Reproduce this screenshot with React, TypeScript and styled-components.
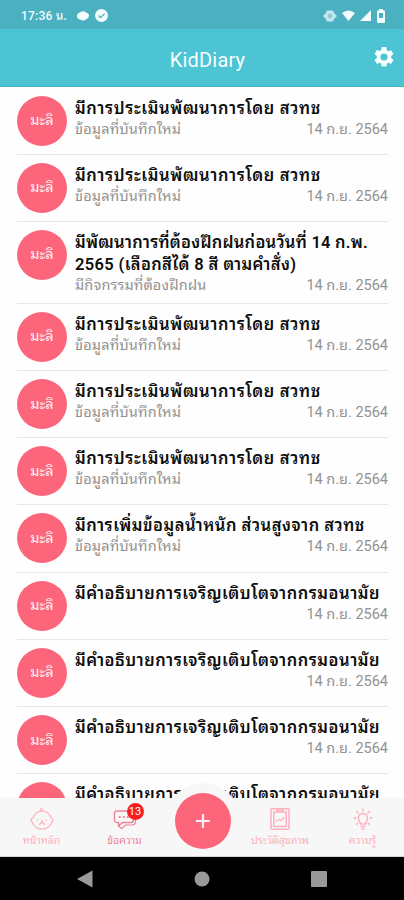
import React from "react";
import styled, { createGlobalStyle } from "styled-components";

const Global = createGlobalStyle`
  * { box-sizing: border-box; }
  body { margin: 0; background: #fff; }
`;

const Screen = styled.div`
  width: 404px;
  height: 900px;
  display: flex;
  flex-direction: column;
  overflow: hidden;
  background: #fefefe;
  font-family: Roboto, "Noto Sans Thai Looped", "Noto Sans", sans-serif;
`;

const StatusBar = styled.div`
  height: 29px;
  flex: none;
  display: flex;
  align-items: center;
  justify-content: space-between;
  padding: 2px 18px 0 21px;
  background: #4bb0c0;
  color: #f2fcfd;
`;

const Clock = styled.span`
  width: 56px;
  font-size: 12px;
  line-height: 14px;
  font-weight: 500;
  letter-spacing: 0.2px;
  white-space: nowrap;
`;

const StatusGroup = styled.div<{ $gap: number }>`
  display: flex;
  align-items: center;
  gap: ${(p) => p.$gap}px;
  svg { display: block; }
`;

const Header = styled.header`
  height: 58px;
  flex: none;
  display: grid;
  grid-template-columns: 1fr auto 1fr;
  align-items: center;
  padding: 0 8px 0 19px;
  background: #4cc4d3;
  border-bottom: 1px solid #45b3c7;
  color: #f6feff;
`;

const Title = styled.h1`
  grid-column: 2;
  margin: 4px 0 0;
  font-size: 20px;
  line-height: 24px;
  font-weight: 400;
  letter-spacing: 0.2px;
`;

const SettingsButton = styled.button`
  justify-self: end;
  width: 24px;
  height: 24px;
  margin-top: -2px;
  padding: 0;
  border: 0;
  background: none;
  color: #f7ffff;
`;

const List = styled.main`
  flex: 1;
  min-height: 0;
  overflow: hidden;
  padding: 0.5px 16px 0 17px;
`;

const Row = styled.article<{ $tall?: boolean }>`
  height: ${(p) => (p.$tall ? 82 : 67.2)}px;
  display: flex;
  gap: 8px;
  padding-top: 8px;
  border-bottom: 1px solid #e6e6e6;
`;

const Avatar = styled.div`
  width: 50px;
  height: 50px;
  flex: none;
  display: flex;
  align-items: center;
  justify-content: center;
  padding-top: 1px;
  border-radius: 50%;
  background: #fd657b;
  color: #fff0f2;
  font-size: 14.5px;
  line-height: 20px;
`;

const Body = styled.div`
  flex: 1;
  min-width: 0;
  padding-top: 2px;
`;

const Line = styled.div<{ $spacing: number }>`
  height: 22px;
  line-height: 22px;
  font-size: 16.5px;
  font-weight: 600;
  color: #0d0d0d;
  white-space: nowrap;
  letter-spacing: ${(p) => p.$spacing}px;
`;

const Meta = styled.div`
  display: flex;
  justify-content: space-between;
  height: 20px;
  line-height: 20px;
  font-size: 14.5px;
  color: #929292;
  white-space: nowrap;
`;

const Note = styled.span`
  letter-spacing: 0.15px;
`;

const TabBar = styled.nav`
  position: relative;
  height: 59px;
  flex: none;
  display: grid;
  grid-template-columns: 83px 83px 73px 82px 83px;
  background: #f7f7f7;
  border-bottom: 1px solid #d5d5d5;
`;

const Tab = styled.div<{ $active?: boolean }>`
  display: flex;
  flex-direction: column;
  align-items: center;
  padding-top: 10px;
  font-size: 10.5px;
  line-height: 16px;
  white-space: nowrap;
  color: ${(p) => (p.$active ? "#f08295" : "#fdafbb")};
  svg { display: block; }
`;

const IconBox = styled.div`
  position: relative;
  height: 25px;
`;

const Badge = styled.span`
  position: absolute;
  left: 14px;
  top: -5px;
  width: 17px;
  height: 17px;
  border-radius: 50%;
  background: #f91d22;
  color: #fff;
  font-size: 11px;
  line-height: 17px;
  text-align: center;
`;

const AddSlot = styled.div`
  position: relative;
`;

const AddRing = styled.div`
  position: absolute;
  left: 50%;
  top: -15px;
  width: 74px;
  height: 73px;
  margin-left: -37px;
  display: flex;
  align-items: center;
  justify-content: center;
  padding-top: 2px;
  border-radius: 50%;
  background: #f7f7f7;
`;

const AddButton = styled.button`
  width: 56px;
  height: 56px;
  display: flex;
  align-items: center;
  justify-content: center;
  padding: 0;
  border: 0;
  border-radius: 50%;
  background: #fd657b;
`;

const SystemBar = styled.footer`
  height: 43px;
  flex: none;
  display: grid;
  grid-template-columns: repeat(3, 117px);
  justify-content: center;
  place-items: center;
  background: #000;
`;

type Message = { lines: { text: string; spacing: number }[]; note: string };

const assessment: Message = {
  lines: [{ text: "มีการประเมินพัฒนาการโดย สวทช", spacing: 0.63 }],
  note: "ข้อมูลที่บันทึกใหม่",
};
const growth: Message = {
  lines: [{ text: "มีคำอธิบายการเจริญเติบโตจากกรมอนามัย", spacing: 0.52 }],
  note: "",
};

const messages: Message[] = [
  assessment,
  assessment,
  {
    lines: [
      { text: "มีพัฒนาการที่ต้องฝึกฝนก่อนวันที่ 14 ก.พ.", spacing: 0.25 },
      { text: "2565 (เลือกสีได้ 8 สี ตามคำสั่ง)", spacing: 0.35 },
    ],
    note: "มีกิจกรรมที่ต้องฝึกฝน",
  },
  assessment,
  assessment,
  assessment,
  {
    lines: [{ text: "มีการเพิ่มข้อมูลน้ำหนัก ส่วนสูงจาก สวทช", spacing: 0.5 }],
    note: "ข้อมูลที่บันทึกใหม่",
  },
  growth,
  growth,
  growth,
  growth,
];

const stroke = { fill: "none", stroke: "currentColor", strokeLinecap: "round", strokeLinejoin: "round" } as const;

export default function App() {
  return (
    <Screen>
      <Global />
      <StatusBar>
        <StatusGroup $gap={0}>
          <Clock>17:36 น.</Clock>
          <StatusGroup $gap={6}>
            <svg width="12" height="10" viewBox="0 0 12 10" fill="currentColor">
              <path d="M3 1.5Q6-.8 9 1.5Q12 2 12 5Q11.5 8 9 8.5Q6 10.5 3 8.5Q0 8 0 5Q0 2 3 1.5Z" />
            </svg>
            <svg width="13" height="13" viewBox="0 0 13 13">
              <circle cx="6.5" cy="6.5" r="6.5" fill="currentColor" />
              <path d="M3.5 6.5L5.6 8.6L9.6 4.6" fill="none" stroke="#4bb0c0" strokeWidth="1.3" />
            </svg>
          </StatusGroup>
        </StatusGroup>
        <StatusGroup $gap={5}>
          <svg width="14" height="12" viewBox="0 0 14 12" fill="currentColor" opacity=".72">
            <path d="M4 .5H10L11.5 3.5L14 6L11.5 8.5L10 11.5H4L2.5 8.5L0 6L2.5 3.5Z" />
            <circle cx="7" cy="6" r="2.4" fill="#a5d9df" />
          </svg>
          <svg width="13" height="11" viewBox="0 0 13 11" fill="currentColor">
            <path d="M0 3Q6.5-2 13 3L6.5 11Z" />
          </svg>
          <svg width="11" height="11" viewBox="0 0 11 11" fill="currentColor">
            <path d="M0 11L11 0V11Z" />
          </svg>
          <svg width="10" height="14" viewBox="0 0 10 14">
            <path d="M3 0H7V1.5H8.5Q9 1.5 9 2V13Q9 14 8 14H2Q1 14 1 13V2Q1 1.5 1.5 1.5H3ZM3 4V9H7V4Z" fill="currentColor" fillRule="evenodd" />
          </svg>
        </StatusGroup>
      </StatusBar>
      <Header>
        <Title>KidDiary</Title>
        <SettingsButton aria-label="Settings">
          <svg width="24" height="24" viewBox="0 0 24 24" fill="currentColor">
            <path d="M19.14 12.94c.04-.3.06-.61.06-.94s-.02-.64-.07-.94l2.03-1.58a.49.49 0 0 0 .12-.61l-1.92-3.32a.49.49 0 0 0-.59-.22l-2.39.96a7 7 0 0 0-1.62-.94l-.36-2.54A.48.48 0 0 0 13.92 2h-3.84a.48.48 0 0 0-.47.41l-.36 2.54a7.3 7.3 0 0 0-1.62.94l-2.39-.96a.48.48 0 0 0-.59.22L2.74 8.87a.48.48 0 0 0 .12.61l2.03 1.58a6 6 0 0 0 0 1.88l-2.03 1.58a.49.49 0 0 0-.12.61l1.92 3.32c.12.22.37.29.59.22l2.39-.96c.5.38 1.03.7 1.62.94l.36 2.54c.05.24.24.41.48.41h3.84c.24 0 .44-.17.47-.41l.36-2.54a7.3 7.3 0 0 0 1.62-.94l2.39.96c.22.08.47 0 .59-.22l1.92-3.32a.48.48 0 0 0-.12-.61zM12 15.6a3.6 3.6 0 1 1 0-7.2 3.6 3.6 0 0 1 0 7.2z" />
          </svg>
        </SettingsButton>
      </Header>
      <List>
        {messages.map((m, i) => (
          <Row key={i} $tall={m.lines.length > 1}>
            <Avatar>มะลิ</Avatar>
            <Body>
              {m.lines.map((l) => (
                <Line key={l.text} $spacing={l.spacing}>{l.text}</Line>
              ))}
              <Meta>
                <Note>{m.note}</Note>
                <span>14 ก.ย. 2564</span>
              </Meta>
            </Body>
          </Row>
        ))}
      </List>
      <TabBar>
        <Tab>
          <IconBox>
            <svg width="24" height="24" viewBox="0 0 24 24" {...stroke}>
              <path d="M12 3C6.500 3 4 7 3 10C1 10.500 0 12.500 2 14C4 18.500 7.500 21 12 21S20 18.500 22 14C24 12.500 23 10.500 21 10C20 7 17.500 3 12 3ZM12 3Q9.500 3 10.500.800Q13 .500 12 3" strokeWidth="1.2" />
              <path d="M7.500 12H7.600M16.400 12H16.500M9.500 16.500L12 14L14.500 16.500M12 14V12.500" strokeWidth="1.300" />
            </svg>
          </IconBox>
          หน้าหลัก
        </Tab>
        <Tab $active>
          <IconBox>
            <svg width="24" height="24" viewBox="0 0 24 24" {...stroke}>
              <path d="M4 3H18Q20.500 3 20.500 5.500V12Q20.500 14.500 18 14.500H9.500L5.500 18V14.500H4Q1.500 14.500 1.500 12V5.500Q1.500 3 4 3Z" strokeWidth="1.400" />
              <path d="M22.500 7V13.500Q22.500 17 19 17H13L8.500 20.500L5.500 18" strokeWidth="1.200" />
              <path d="M6.500 9H7M10.500 9H11M14.500 9H15" strokeWidth="1.800" />
            </svg>
            <Badge>13</Badge>
          </IconBox>
          ข้อความ
        </Tab>
        <AddSlot>
          <AddRing>
            <AddButton aria-label="Add">
              <svg width="16" height="16" viewBox="0 0 16 16">
                <path d="M8 1V15M1 8H15" stroke="#fff1f3" strokeWidth="2.200" />
              </svg>
            </AddButton>
          </AddRing>
        </AddSlot>
        <Tab>
          <IconBox>
            <svg width="20" height="24" viewBox="0 0 20 24" {...stroke}>
              <rect x="1" y="0.8" width="18" height="20.500" rx="1" strokeWidth="1.500" />
              <rect x="3.800" y="4" width="12.400" height="14.500" strokeWidth="1.500" />
              <path d="M6.500 2.500H13.500M6.500 13L9 11.500L11 12.500L14 9.500" strokeWidth="1.300" />
            </svg>
          </IconBox>
          ประวัติสุขภาพ
        </Tab>
        <Tab>
          <IconBox>
            <svg width="20" height="24" viewBox="0 0 20 24" {...stroke}>
              <path d="M7.500 16C7.500 14 5.500 13 5.500 10A4.500 4.500 0 0 1 14.500 10C14.500 13 12.500 14 12.500 16ZM8 18.500H12M9 21H11M10 .800V3M3.500 3.500L5.300 5.300M16.500 3.500L14.700 5.300M1 10H3M17 10H19M3.500 16.500L5 15M16.500 16.500L15 15" strokeWidth="1.300" />
            </svg>
          </IconBox>
          ความรู้
        </Tab>
      </TabBar>
      <SystemBar>
        <svg width="16" height="18" viewBox="0 0 16 18"><path d="M0 9L15.500 .5V17.500Z" fill="#999" /></svg>
        <svg width="16" height="16" viewBox="0 0 16 16"><circle cx="8" cy="8" r="7.500" fill="#999" /></svg>
        <svg width="16" height="16" viewBox="0 0 16 16"><rect width="16" height="16" rx="1" fill="#999" /></svg>
      </SystemBar>
    </Screen>
  );
}
